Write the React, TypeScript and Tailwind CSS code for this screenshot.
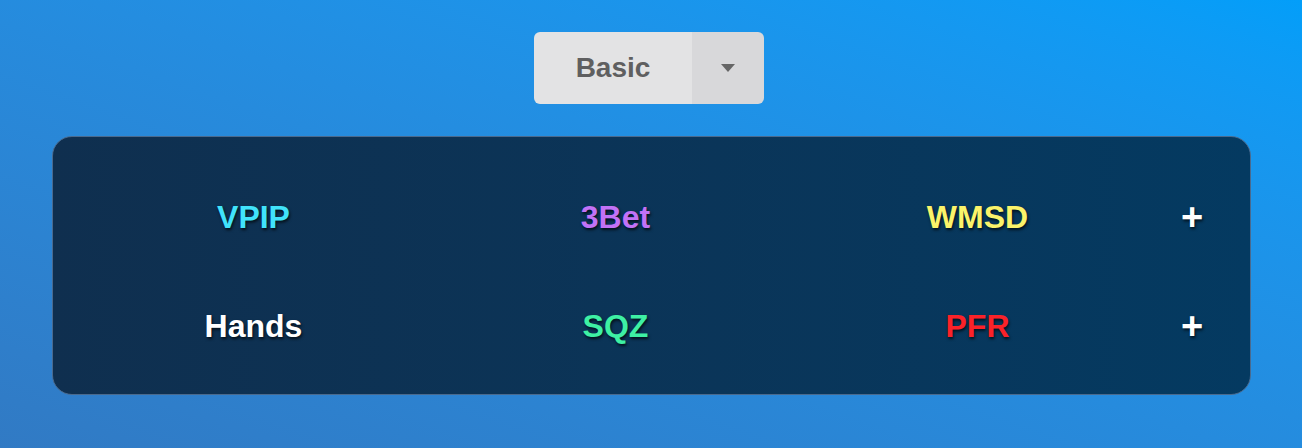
const stats = [
  [
    { label: 'VPIP', color: 'text-[#41e3fb]' },
    { label: '3Bet', color: 'text-[#c272f6]' },
    { label: 'WMSD', color: 'text-[#fbf36a]' },
  ],
  [
    { label: 'Hands', color: 'text-white' },
    { label: 'SQZ', color: 'text-[#3ef0a4]' },
    { label: 'PFR', color: 'text-[#fb2229]' },
  ],
];

const App = () => {
  return (
    <div
      className="h-[448px] w-full bg-gradient-to-tr from-[#317ac4] to-[#039ef9] flex flex-col items-center pt-8"
      style={{ fontFamily: '"Liberation Sans", Arial, sans-serif' }}
    >
      {/* preset selector */}
      <div className="flex h-[72px] rounded-md overflow-hidden mr-1">
        <button className="w-[158px] bg-[#e3e3e4] text-[#5f5f60] text-[28px] font-bold">Basic</button>
        <button className="w-[72px] bg-[#d8d8da] flex items-center justify-center">
          <svg width="16" height="10" viewBox="0 0 16 10">
            <path d="M1 1 L15 1 L8 9 Z" fill="#666" />
          </svg>
        </button>
      </div>

      <div className="mt-8 w-[1199px] h-[259px] rounded-[20px] border border-[#4a6a8e] bg-gradient-to-r from-[#0f2f4f] to-[#043a61] flex flex-col justify-center gap-[47px] pt-3 pl-5 pr-6">
        {stats.map((row, i) => (
          <div key={i} className="flex items-center h-[62px]">
            {row.map((s) => (
              <div
                key={s.label}
                className={`w-[362px] text-center text-[32px] font-bold [text-shadow:1px_2px_3px_rgba(0,0,0,0.7)] ${s.color}`}
              >
                {s.label}
              </div>
            ))}
            <div className="flex-1 text-center text-white text-[38px] font-bold [text-shadow:1px_2px_3px_rgba(0,0,0,0.7)]">+</div>
          </div>
        ))}
      </div>
    </div>
  );
};

export default App;
